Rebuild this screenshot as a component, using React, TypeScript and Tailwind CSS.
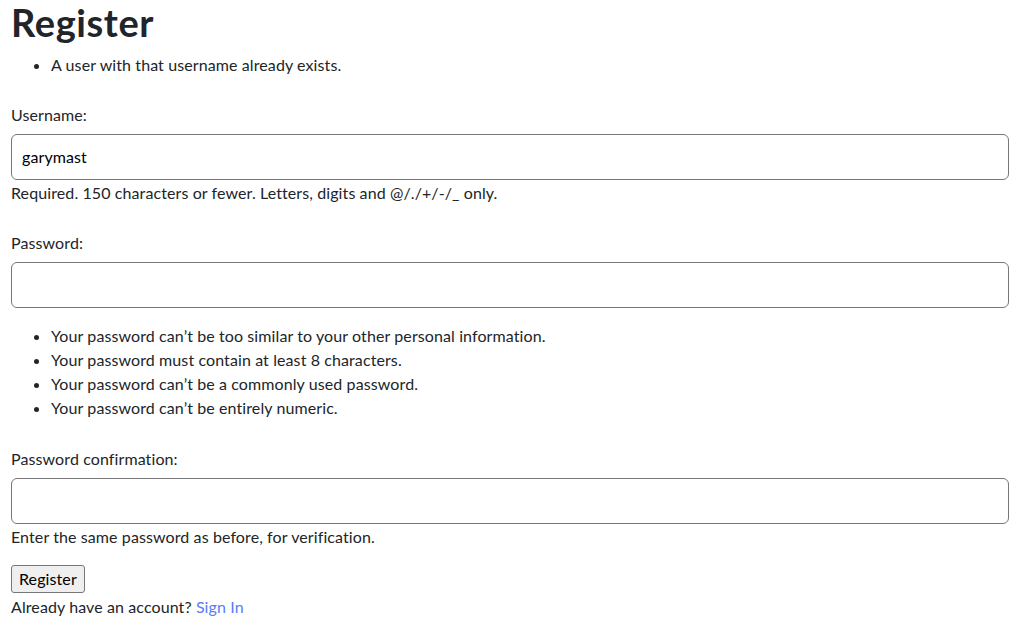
import React from "react";

const font = { fontFamily: '"Lato", "Noto Sans", sans-serif' };

export default function App() {
  return (
    <div className="bg-white text-[#212529] min-h-[636px] px-[11px] text-[16px] leading-[24px] tracking-[0.1px]" style={font}>
      <h1 className="text-[38px] leading-[45px] font-bold tracking-[0.6px] mb-[8px]">Register</h1>
      <ul className="list-disc pl-[40px] mb-[26px]">
        <li>A user with that username already exists.</li>
      </ul>
      <form className="w-[998px]">
        <label className="block mb-[7px]">Username:</label>
        <input
          type="text"
          defaultValue="garymast"
          className="block w-full h-[46px] border border-[#767676] rounded-[6px] px-[10px] pb-[1px] text-[16px] text-black outline-none tracking-[0.1px]"
        />
        <div className="mt-[1px]">Required. 150 characters or fewer. Letters, digits and @/./+/-/_ only.</div>
        <label className="block mt-[26px] mb-[7px]">Password:</label>
        <input
          type="password"
          className="block w-full h-[46px] border border-[#767676] rounded-[6px] px-[10px] text-[16px] outline-none"
        />
        <ul className="list-disc pl-[40px] mt-[16px]">
          <li>Your password can’t be too similar to your other personal information.</li>
          <li>Your password must contain at least 8 characters.</li>
          <li>Your password can’t be a commonly used password.</li>
          <li>Your password can’t be entirely numeric.</li>
        </ul>
        <label className="block mt-[27px] mb-[7px]">Password confirmation:</label>
        <input
          type="password"
          className="block w-full h-[46px] border border-[#767676] rounded-[6px] px-[10px] text-[16px] outline-none"
        />
        <div className="mt-[1px]">Enter the same password as before, for verification.</div>
        <button
          type="button"
          className="mt-[16px] block h-[28px] px-[7px] bg-[#efefef] border border-[#767676] rounded-[3px] text-black text-[16px] leading-[24px]"
        >
          Register
        </button>
      </form>
      <div className="mt-[2px]">
        Already have an account? <a href="#" className="text-[#5a7cf6]">Sign In</a>
      </div>
    </div>
  );
}
